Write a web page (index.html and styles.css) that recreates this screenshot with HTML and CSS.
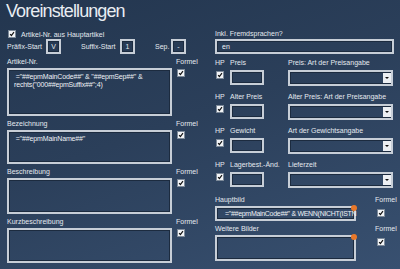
FILE: index.html
```html
<!DOCTYPE html>
<html lang="de">
<head>
    <meta charset="UTF-8">
    <meta name="viewport" content="width=device-width, initial-scale=1.0">
    <title>Voreinstellungen</title>
    <link rel="stylesheet" href="styles.css">
</head>
<body>
    <div class="screen">
        <h1 class="title">Voreinstellungen</h1>

        <div class="columns">
            <div class="col-left">
                <div class="check-row">
                    <span class="cb"><svg viewBox="0 0 8 8"><path d="M1.5 4.2 L3.2 6 L6.6 1.6" /></svg></span>
                    <span>Artikel-Nr. aus Hauptartikel</span>
                </div>

                <div class="prefix-row">
                    <span class="pf-label">Präfix-Start</span>
                    <span class="mini">V</span>
                    <span class="pf-label">Suffix-Start</span>
                    <span class="mini">1</span>
                    <span class="pf-label short">Sep.</span>
                    <span class="mini">-</span>
                </div>

                <div class="field">
                    <div class="lbl">Artikel-Nr.</div>
                    <div class="lbl">Formel</div>
                    <div class="box area h48">
                        <div>&nbsp;="##epmMainCode##" &amp; "##epmSep##" &amp;</div>
                        <div>rechts("000##epmSuffix##";4)</div>
                    </div>
                    <span class="cb"><svg viewBox="0 0 8 8"><path d="M1.5 4.2 L3.2 6 L6.6 1.6" /></svg></span>
                </div>

                <div class="field">
                    <div class="lbl">Bezeichnung</div>
                    <div class="lbl">Formel</div>
                    <div class="box area h34">
                        <div>&nbsp;="##epmMainName##"</div>
                    </div>
                    <span class="cb"><svg viewBox="0 0 8 8"><path d="M1.5 4.2 L3.2 6 L6.6 1.6" /></svg></span>
                </div>

                <div class="field">
                    <div class="lbl">Beschreibung</div>
                    <div class="lbl">Formel</div>
                    <div class="box area h36"></div>
                    <span class="cb"><svg viewBox="0 0 8 8"><path d="M1.5 4.2 L3.2 6 L6.6 1.6" /></svg></span>
                </div>

                <div class="field">
                    <div class="lbl">Kurzbeschreibung</div>
                    <div class="lbl">Formel</div>
                    <div class="box area h35"></div>
                    <span class="cb"><svg viewBox="0 0 8 8"><path d="M1.5 4.2 L3.2 6 L6.6 1.6" /></svg></span>
                </div>
            </div>

            <div class="col-right">
                <div class="lbl">Inkl. Fremdsprachen?</div>
                <div class="box line lang">en</div>

                <div class="hp-row">
                    <div class="lbl">HP</div>
                    <div class="lbl">Preis</div>
                    <div class="lbl">Preis: Art der Preisangabe</div>
                    <span class="cb"><svg viewBox="0 0 8 8"><path d="M1.5 4.2 L3.2 6 L6.6 1.6" /></svg></span>
                    <div class="box small"></div>
                    <div class="box select"><span class="drop"></span></div>
                </div>

                <div class="hp-row">
                    <div class="lbl">HP</div>
                    <div class="lbl">Alter Preis</div>
                    <div class="lbl">Alter Preis: Art der Preisangabe</div>
                    <span class="cb"><svg viewBox="0 0 8 8"><path d="M1.5 4.2 L3.2 6 L6.6 1.6" /></svg></span>
                    <div class="box small"></div>
                    <div class="box select"><span class="drop"></span></div>
                </div>

                <div class="hp-row">
                    <div class="lbl">HP</div>
                    <div class="lbl">Gewicht</div>
                    <div class="lbl">Art der Gewichtsangabe</div>
                    <span class="cb"><svg viewBox="0 0 8 8"><path d="M1.5 4.2 L3.2 6 L6.6 1.6" /></svg></span>
                    <div class="box small"></div>
                    <div class="box select"><span class="drop"></span></div>
                </div>

                <div class="hp-row">
                    <div class="lbl">HP</div>
                    <div class="lbl">Lagerbest.-Änd.</div>
                    <div class="lbl">Lieferzeit</div>
                    <span class="cb"><svg viewBox="0 0 8 8"><path d="M1.5 4.2 L3.2 6 L6.6 1.6" /></svg></span>
                    <div class="box small"></div>
                    <div class="box select"><span class="drop"></span></div>
                </div>

                <div class="img-field first">
                    <div class="lbl">Hauptbild</div>
                    <div class="lbl">Formel</div>
                    <div class="box line pic">
                        <span>="##epmMainCode##" &amp; WENN(NICHT(ISTN</span>
                        <span class="dot"></span>
                    </div>
                    <span class="cb"><svg viewBox="0 0 8 8"><path d="M1.5 4.2 L3.2 6 L6.6 1.6" /></svg></span>
                </div>

                <div class="img-field">
                    <div class="lbl">Weitere Bilder</div>
                    <div class="lbl">Formel</div>
                    <div class="box more">
                        <span class="dot"></span>
                    </div>
                    <span class="cb"><svg viewBox="0 0 8 8"><path d="M1.5 4.2 L3.2 6 L6.6 1.6" /></svg></span>
                </div>
            </div>
        </div>
    </div>
</body>
</html>
```

FILE: styles.css
```css
* {
    box-sizing: border-box;
}
body {
    margin: 0;
    font-family: "Liberation Sans", Arial, sans-serif;
    color: #e4e9ef;
}
.screen {
    width: 400px;
    height: 269px;
    overflow: hidden;
    background: linear-gradient(160deg, #23364f 0%, #2b3f5a 45%, #385070 100%);
}
.title {
    margin: 0;
    padding: 1px 0 0 6px;
    height: 29px;
    font-size: 18px;
    line-height: 20px;
    font-weight: normal;
    letter-spacing: -0.9px;
    color: #e8edf2;
}
.columns {
    display: flex;
}
.col-left {
    width: 215px;
    padding-left: 7px;
}
.col-right {
    width: 180px;
}
.lbl,
.check-row,
.prefix-row,
.box {
    font-size: 7px;
    line-height: 9px;
    white-space: nowrap;
}

/* checkbox */
.cb {
    display: block;
    width: 8px;
    height: 8px;
    background: #f2f4f7;
    border: 1px solid #7d8a99;
}
.cb svg {
    display: block;
    width: 6px;
    height: 6px;
}
.cb path {
    fill: none;
    stroke: #111;
    stroke-width: 1.6;
}

.check-row {
    display: flex;
    align-items: center;
    height: 10px;
    padding-left: 1px;
}
.check-row .cb {
    margin-right: 5px;
}

.prefix-row {
    display: flex;
    align-items: center;
    height: 15px;
}
.pf-label {
    width: 39px;
}
.pf-label.short {
    width: 16px;
}
.mini {
    width: 15px;
    height: 15px;
    margin-right: 20px;
    text-align: center;
    line-height: 11px;
    border: 2px solid #c7ced7;
    box-shadow: inset 0 0 0 1px #1c2b3f;
}

/* boxes */
.box {
    border: 2px solid #c7ced7;
    box-shadow: inset 0 0 0 1px #1c2b3f;
    color: #eef1f5;
}
.area {
    padding: 3px 5px;
    line-height: 8px;
    letter-spacing: -0.15px;
}
.h48 { height: 48px; }
.h34 { height: 34px; }
.h36 { height: 36px; }
.h35 { height: 35px; }

.field {
    display: grid;
    grid-template-columns: 165px 1fr;
    column-gap: 4px;
    row-gap: 2px;
    margin-top: 3px;
}
.field .cb {
    margin-left: 1px;
    margin-top: 1px;
}

.line {
    height: 15px;
    line-height: 11px;
}
.lang {
    width: 179px;
    padding-left: 5px;
    margin-top: 1px;
}

.hp-row {
    display: grid;
    grid-template-columns: 15px 58px 105px;
    row-gap: 1px;
    margin-top: 4px;
    height: 30px;
}
.hp-row .cb {
    margin-left: 1px;
    margin-top: 1px;
}
.small {
    width: 34px;
    height: 15px;
}
.select {
    position: relative;
    height: 16px;
}
.drop {
    position: absolute;
    right: 0;
    top: 1px;
    width: 8px;
    height: 10px;
    background: #eceff3;
}
.drop::after {
    content: "";
    position: absolute;
    left: 2px;
    top: 4px;
    border-left: 2px solid transparent;
    border-right: 2px solid transparent;
    border-top: 2px solid #111;
}

.img-field {
    display: grid;
    grid-template-columns: 141px 1fr;
    column-gap: 19px;
    row-gap: 2px;
    margin-top: 3px;
}
.img-field.first {
    margin-top: 5px;
}
.img-field .cb {
    margin-left: 2px;
    margin-top: 3px;
}
.pic,
.more {
    position: relative;
}
.pic {
    padding-left: 8px;
    letter-spacing: -0.3px;
}
.more {
    height: 26px;
}
.dot {
    position: absolute;
    right: -3px;
    top: -3px;
    width: 6px;
    height: 6px;
    border-radius: 50%;
    background: #e9782a;
}
```
